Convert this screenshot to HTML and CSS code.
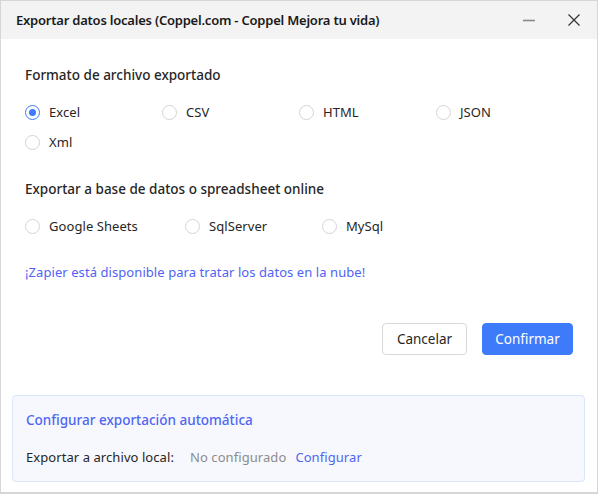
FILE: index.html
```html
<!DOCTYPE html>
<html lang="es">
<head>
<meta charset="utf-8">
<link rel="stylesheet" href="styles.css">
</head>
<body>
<div class="dialog">
  <div class="titlebar">
    <div class="title">Exportar datos locales (Coppel.com - Coppel Mejora tu vida)</div>
    <div class="controls">
      <svg class="ctl" width="14" height="14" viewBox="0 0 14 14"><path d="M1 7.5H13" stroke="#8a8a8a" stroke-width="1.6"/></svg>
      <svg class="ctl" width="14" height="14" viewBox="0 0 14 14"><path d="M1.5 1.5L12.5 12.5M12.5 1.5L1.5 12.5" stroke="#333" stroke-width="1.2"/></svg>
    </div>
  </div>
  <div class="content">
    <div class="section-title">Formato de archivo exportado</div>
    <div class="radios">
      <label class="radio w137"><span class="dot checked"></span>Excel</label>
      <label class="radio w137"><span class="dot"></span>CSV</label>
      <label class="radio w137"><span class="dot"></span>HTML</label>
      <label class="radio w137"><span class="dot"></span>JSON</label>
    </div>
    <div class="radios row2">
      <label class="radio w137"><span class="dot"></span>Xml</label>
    </div>
    <div class="section-title s2">Exportar a base de datos o spreadsheet online</div>
    <div class="radios">
      <label class="radio w160"><span class="dot"></span>Google Sheets</label>
      <label class="radio w137"><span class="dot"></span>SqlServer</label>
      <label class="radio w137"><span class="dot"></span>MySql</label>
    </div>
    <a class="zapier">¡Zapier está disponible para tratar los datos en la nube!</a>
    <div class="actions">
      <button class="btn cancel">Cancelar</button>
      <button class="btn confirm">Confirmar</button>
    </div>
  </div>
  <div class="auto">
    <div class="auto-title">Configurar exportación automática</div>
    <div class="auto-row">
      <span class="lbl">Exportar a archivo local:</span>
      <span class="muted">No configurado</span>
      <a class="link">Configurar</a>
    </div>
  </div>
</div>
</body>
</html>
```
FILE: styles.css
```css
* { box-sizing: border-box; }
html, body { margin: 0; padding: 0; }
body {
  font-family: "Noto Sans", "Open Sans", sans-serif;
  font-size: 13px;
  color: #262626;
  background: #fff;
  letter-spacing: 0.07px;
}
.dialog {
  width: 598px;
  height: 494px;
  border: 1px solid #d6d6d6;
  border-bottom-width: 2px;
  background: #fff;
  display: flex;
  flex-direction: column;
}
.titlebar {
  height: 38px;
  background: #f3f3f3;
  display: flex;
  align-items: center;
  justify-content: space-between;
  padding: 0 16px 0 15px;
}
.title {
  font-weight: 600;
  font-size: 13px;
  color: #1a1a1a;
  letter-spacing: -0.22px;
}
.controls { display: flex; gap: 31px; align-items: center; }
.ctl { display: block; }
.content {
  padding: 26px 24px 0 24px;
}
.section-title {
  font-size: 13.5px;
  font-weight: 500;
  color: #262626;
  line-height: 20px;
  letter-spacing: 0;
}
.section-title.s2 { margin-top: 27px; }
.radios {
  display: flex;
  margin-top: 17px;
}
.radios.row2 { margin-top: 10px; }
.radio {
  display: flex;
  align-items: center;
  height: 20px;
  color: #262626;
}
.w137 { width: 137px; }
.w160 { width: 160px; }
.dot {
  width: 15px;
  height: 15px;
  border: 1px solid #d4d4d4;
  border-radius: 50%;
  margin-right: 9px;
  background: #fff;
  position: relative;
}
.dot.checked { border-color: #3e7bfa; }
.dot.checked::after {
  content: "";
  position: absolute;
  left: 3px; top: 3px;
  width: 7px; height: 7px;
  border-radius: 50%;
  background: #3e7bfa;
}
.zapier {
  display: block;
  margin-top: 26px;
  color: #4f63f5;
  line-height: 20px;
}
.actions {
  display: flex;
  justify-content: flex-end;
  gap: 15px;
  margin-top: 41px;
}
.btn {
  font-family: inherit;
  font-size: 13.5px;
  height: 32px;
  border-radius: 4px;
  padding: 0 10px;
  cursor: pointer;
}
.cancel {
  width: 85px;
  background: #fff;
  border: 1px solid #d9d9d9;
  color: #262626;
}
.confirm {
  width: 91px;
  background: #3e7bfa;
  border: 1px solid #3e7bfa;
  color: #fff;
}
.auto {
  margin: 40px 12px 0 11px;
  background: #f7f8fd;
  border: 1px solid #d9e6fb;
  border-radius: 4px;
  padding: 14px 13px 14px 13px;
  height: 87px;
}
.auto-title {
  color: #4e66f2;
  font-weight: 500;
  font-size: 13.5px;
  line-height: 20px;
  letter-spacing: 0;
}
.auto-row {
  margin-top: 17px;
  line-height: 20px;
  display: flex;
}
.lbl { color: #262626; width: 164px; }
.muted { color: #8c8c8c; margin-right: 9px; }
.link { color: #4e66f2; }
```
